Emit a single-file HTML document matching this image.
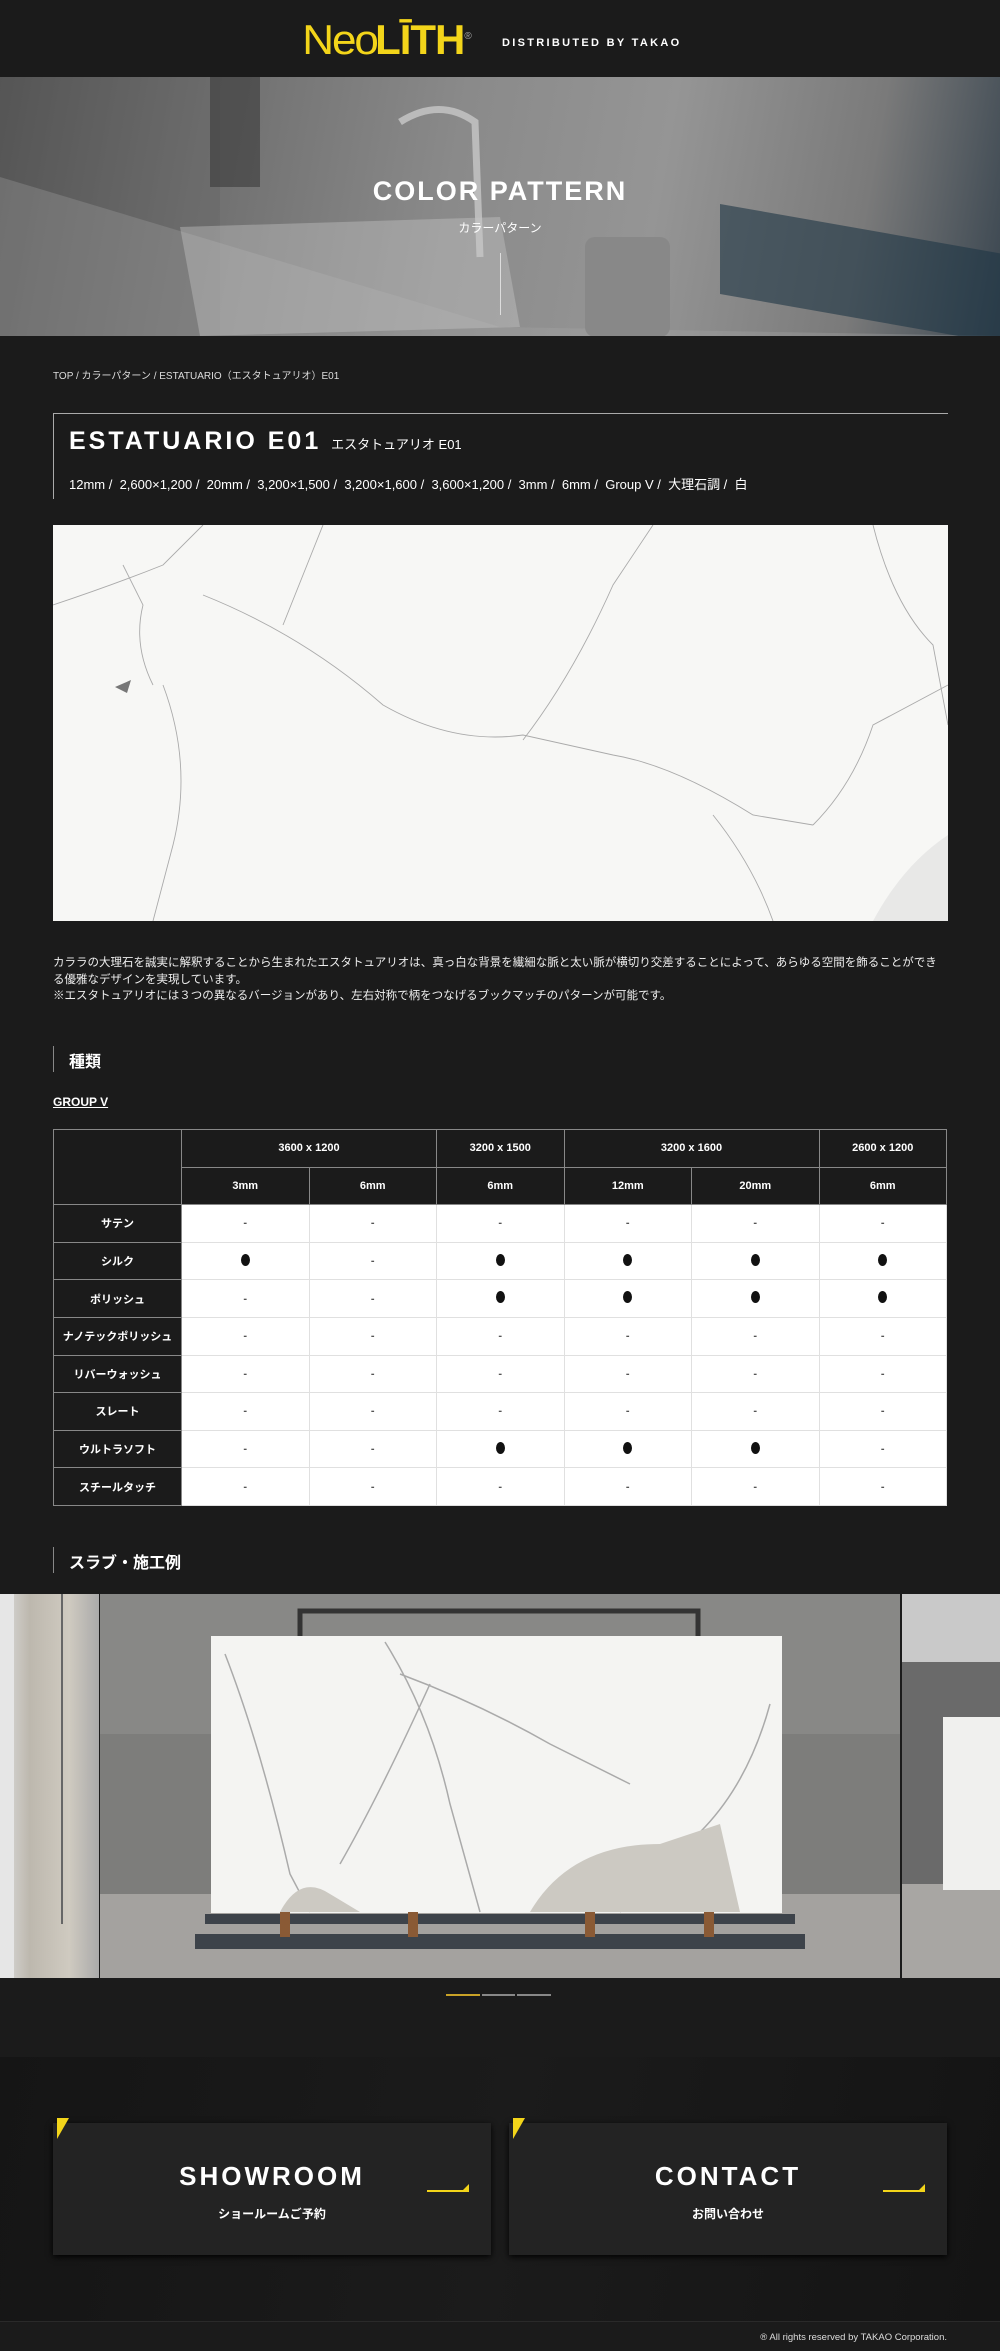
<!DOCTYPE html>
<html><head><meta charset="utf-8">
<style>
*{margin:0;padding:0;box-sizing:border-box}
body{width:1000px;height:2351px;background:#1b1b1b;color:#fff;font-family:"Liberation Sans","Noto Sans CJK JP",sans-serif;position:relative;overflow:hidden}
.abs{position:absolute}
.logo{left:304px;top:16px;font-size:42px;color:#f3d51a;line-height:42px}
.logo .n{font-weight:300;letter-spacing:-2px;transform:scaleX(1.05);display:inline-block}
.logo .b{font-weight:bold;letter-spacing:-1px}
.dist{left:502px;top:37px;font-size:11px;font-weight:bold;letter-spacing:2.3px}
.ham span{position:absolute;height:2px;background:#c9a227;right:27px}
.hero{left:0;top:77px;width:1000px;height:259px;background:linear-gradient(100deg,#4a4a4a 0%,#6e6e6e 20%,#8a8a8a 45%,#959595 65%,#7a7a7a 85%,#3a4650 100%);overflow:hidden}
.bc{left:53px;top:367px;font-size:10px;color:#ddd}
table{border-collapse:collapse;position:absolute;left:53px;top:1129px;width:894px;font-size:11px;font-weight:bold;table-layout:fixed}
td,th{text-align:center;height:37.6px;border:1px solid #888}
th{background:#1b1b1b;color:#fff}
tbody td{background:#fff;color:#555;border-color:#e0e0e0}
tbody th{border-color:#888}
.dot{display:inline-block;width:9px;height:12px;border-radius:50%;background:#111}
.card{background:#232323;box-shadow:0 2px 6px #000;top:2123px;height:132px;width:438px}
.card .t{position:absolute;left:0;right:0;top:38px;text-align:center;font-size:26px;font-weight:bold;letter-spacing:3px}
.card .s{position:absolute;left:0;right:0;top:82px;text-align:center;font-size:12px;font-weight:bold}
.tri{width:0;height:0;border-top:21px solid #f3d51a;border-right:12px solid transparent;position:absolute;left:4px;top:-5px}
.arr{position:absolute;left:374px;top:67px;width:42px;height:2px;background:#f3d51a}
.arr:after{content:"";position:absolute;right:0;top:-6px;border-left:6px solid transparent;border-bottom:6px solid #f3d51a}
</style></head><body>
<div class="abs logo"><span class="n">Neo</span><span class="b">LĪTH</span><sup style="font-size:10px;color:#aaa">®</sup></div>
<div class="abs dist">DISTRIBUTED BY TAKAO</div>
<div class="abs ham"><span style="top:30px;width:32px"></span><span style="top:37px;width:28px"></span><span style="top:44px;width:20px"></span></div>

<div class="abs hero">
<svg width="1000" height="259" style="position:absolute;left:0;top:0">
<rect x="0" y="0" width="220" height="259" fill="#666" opacity=".4"/>
<rect x="210" y="0" width="50" height="110" fill="#3a3a3a" opacity=".6"/>
<path d="M0 100 L500 250 L1000 259 L0 259Z" fill="#aaa" opacity=".3"/>
<path d="M400 45 Q440 20 475 45 L480 180" stroke="#bbb" stroke-width="7" fill="none"/>
<path d="M180 150 L500 140 L520 250 L200 259Z" fill="#c8c8c8" opacity=".4"/>
<rect x="585" y="160" width="85" height="100" rx="10" fill="#888"/>
<rect x="720" y="0" width="280" height="90" fill="#1e3544" opacity=".6" transform="skewY(10)"/>
</svg>
<div style="position:absolute;left:0;right:0;top:99px;text-align:center;font-size:27px;font-weight:bold;letter-spacing:2px">COLOR PATTERN</div>
<div style="position:absolute;left:0;right:0;top:142px;text-align:center;font-size:12px">カラーパターン</div>
<div style="position:absolute;left:500px;top:176px;width:1px;height:62px;background:#ddd"></div>
</div>

<div class="abs bc">TOP / カラーパターン / ESTATUARIO（エスタトュアリオ）E01</div>
<div class="abs" style="left:53px;top:413px;width:895px;height:1px;background:#aaa"></div>
<div class="abs" style="left:53px;top:413px;width:1px;height:86px;background:#aaa"></div>
<div class="abs" style="left:69px;top:427px;font-size:25px;font-weight:bold;letter-spacing:3px">ESTATUARIO E01 <span style="font-size:13px;letter-spacing:0;font-weight:normal">エスタトュアリオ E01</span></div>
<div class="abs" style="left:69px;top:474px;font-size:13px">12mm / &nbsp;2,600×1,200 / &nbsp;20mm / &nbsp;3,200×1,500 / &nbsp;3,200×1,600 / &nbsp;3,600×1,200 / &nbsp;3mm / &nbsp;6mm / &nbsp;Group V / &nbsp;大理石調 / &nbsp;白</div>

<svg class="abs" style="left:53px;top:525px" width="895" height="396">
<rect width="895" height="396" fill="#f7f7f5"/>
<g fill="none" stroke="#aaa" stroke-width="0.9">
<path d="M0 80 Q60 60 110 40 L150 0"/>
<path d="M100 160 Q80 120 90 80 L70 40"/>
<path d="M150 70 Q250 110 330 180 Q400 220 470 210 L560 230 Q620 240 700 290 L760 300"/>
<path d="M230 100 L270 0"/>
<path d="M110 160 Q140 240 120 320 L100 396"/>
<path d="M470 215 Q520 150 560 60 L600 0"/>
<path d="M760 300 Q800 260 820 200 L895 160"/>
<path d="M820 0 Q840 80 880 120 L895 200"/>
<path d="M660 290 Q700 340 720 396"/>
</g>
<path d="M820 396 Q850 340 895 310 L895 396Z" fill="#ddd" opacity=".6"/>
<path d="M62 162 L78 155 L74 168Z" fill="#777"/>
</svg>

<div class="abs" style="left:53px;top:955px;width:895px;font-size:11.5px;line-height:16.5px;color:#eee">カララの大理石を誠実に解釈することから生まれたエスタトュアリオは、真っ白な背景を繊細な脈と太い脈が横切り交差することによって、あらゆる空間を飾ることができる優雅なデザインを実現しています。<br>※エスタトュアリオには３つの異なるバージョンがあり、左右対称で柄をつなげるブックマッチのパターンが可能です。</div>

<div class="abs" style="left:53px;top:1046px;width:1px;height:26px;background:#888"></div>
<div class="abs" style="left:69px;top:1048px;font-size:16px;font-weight:bold">種類</div>
<div class="abs" style="left:53px;top:1095px;font-size:12px;font-weight:bold;text-decoration:underline">GROUP V</div>

<table>
<colgroup><col style="width:128px"><col><col><col><col><col><col></colgroup>
<thead>
<tr><th rowspan="2"></th><th colspan="2">3600 x 1200</th><th>3200 x 1500</th><th colspan="2">3200 x 1600</th><th>2600 x 1200</th></tr>
<tr><th>3mm</th><th>6mm</th><th>6mm</th><th>12mm</th><th>20mm</th><th>6mm</th></tr>
</thead>
<tbody>
<tr><th>サテン</th><td>-</td><td>-</td><td>-</td><td>-</td><td>-</td><td>-</td></tr>
<tr><th>シルク</th><td><i class="dot"></i></td><td>-</td><td><i class="dot"></i></td><td><i class="dot"></i></td><td><i class="dot"></i></td><td><i class="dot"></i></td></tr>
<tr><th>ポリッシュ</th><td>-</td><td>-</td><td><i class="dot"></i></td><td><i class="dot"></i></td><td><i class="dot"></i></td><td><i class="dot"></i></td></tr>
<tr><th>ナノテックポリッシュ</th><td>-</td><td>-</td><td>-</td><td>-</td><td>-</td><td>-</td></tr>
<tr><th>リバーウォッシュ</th><td>-</td><td>-</td><td>-</td><td>-</td><td>-</td><td>-</td></tr>
<tr><th>スレート</th><td>-</td><td>-</td><td>-</td><td>-</td><td>-</td><td>-</td></tr>
<tr><th>ウルトラソフト</th><td>-</td><td>-</td><td><i class="dot"></i></td><td><i class="dot"></i></td><td><i class="dot"></i></td><td>-</td></tr>
<tr><th>スチールタッチ</th><td>-</td><td>-</td><td>-</td><td>-</td><td>-</td><td>-</td></tr>
</tbody>
</table>

<div class="abs" style="left:53px;top:1547px;width:1px;height:26px;background:#888"></div>
<div class="abs" style="left:69px;top:1549px;font-size:16px;font-weight:bold">スラブ・施工例</div>

<div class="abs" style="left:0;top:1594px;width:99px;height:384px;background:linear-gradient(90deg,#ddd,#bdb8ae 30%,#cfcac0 70%,#aaa)"></div>
<div class="abs" style="left:0;top:1594px;width:14px;height:384px;background:#e6e6e6"></div>
<div class="abs" style="left:61px;top:1594px;width:2px;height:330px;background:#666"></div>
<svg class="abs" style="left:100px;top:1594px" width="800" height="384">
<rect width="800" height="384" fill="#7d7d7b"/>
<rect y="0" width="800" height="140" fill="#888886"/>
<rect y="300" width="800" height="84" fill="#a4a29f"/>
<rect x="200" y="17" width="398" height="45" fill="none" stroke="#333" stroke-width="5"/>
<rect x="111" y="42" width="571" height="277" fill="#f4f4f2"/>
<g fill="none" stroke="#aaa" stroke-width="1.5">
<path d="M125 60 Q160 150 190 280 L210 318"/>
<path d="M285 48 Q330 120 350 210 L380 318"/>
<path d="M300 80 Q380 110 450 150 L530 190"/>
<path d="M330 90 Q280 200 240 270"/>
<path d="M670 110 Q640 220 560 270 L520 318"/>
</g>
<path d="M180 318 Q200 280 230 300 L260 318Z M430 318 Q470 250 560 250 L620 230 L640 318Z" fill="#ccc9c2"/>
<rect x="105" y="320" width="590" height="10" fill="#3d434a"/>
<rect x="95" y="340" width="610" height="15" fill="#3d434a"/>
<rect x="180" y="318" width="10" height="25" fill="#8a5a35"/><rect x="308" y="318" width="10" height="25" fill="#8a5a35"/><rect x="485" y="318" width="10" height="25" fill="#8a5a35"/><rect x="604" y="318" width="10" height="25" fill="#8a5a35"/>
</svg>
<div class="abs" style="left:902px;top:1594px;width:98px;height:384px;background:linear-gradient(#c9c9c9 0 68px,#6a6a6a 68px 290px,#a8a6a3 290px)"></div>
<div class="abs" style="left:943px;top:1717px;width:57px;height:173px;background:#f0f0ee"></div>

<div class="abs" style="left:446px;top:1994px;width:34px;height:2px;background:#c9a227"></div>
<div class="abs" style="left:482px;top:1994px;width:33px;height:2px;background:#888"></div>
<div class="abs" style="left:517px;top:1994px;width:34px;height:2px;background:#888"></div>

<div class="abs" style="left:0;top:2057px;width:1000px;height:264px;background:linear-gradient(100deg,#151515,#1b1b1b 50%,#141414)"></div>
<div class="abs card" style="left:53px"><div class="tri"></div><div class="t">SHOWROOM</div><div class="s">ショールームご予約</div><div class="arr"></div></div>
<div class="abs card" style="left:509px"><div class="tri"></div><div class="t">CONTACT</div><div class="s">お問い合わせ</div><div class="arr"></div></div>
<div class="abs" style="left:0;top:2321px;width:1000px;height:1px;background:#2a2a2a"></div>
<div class="abs" style="right:53px;top:2332px;font-size:9.5px;color:#ddd">® All rights reserved by TAKAO Corporation.</div>
</body></html>
